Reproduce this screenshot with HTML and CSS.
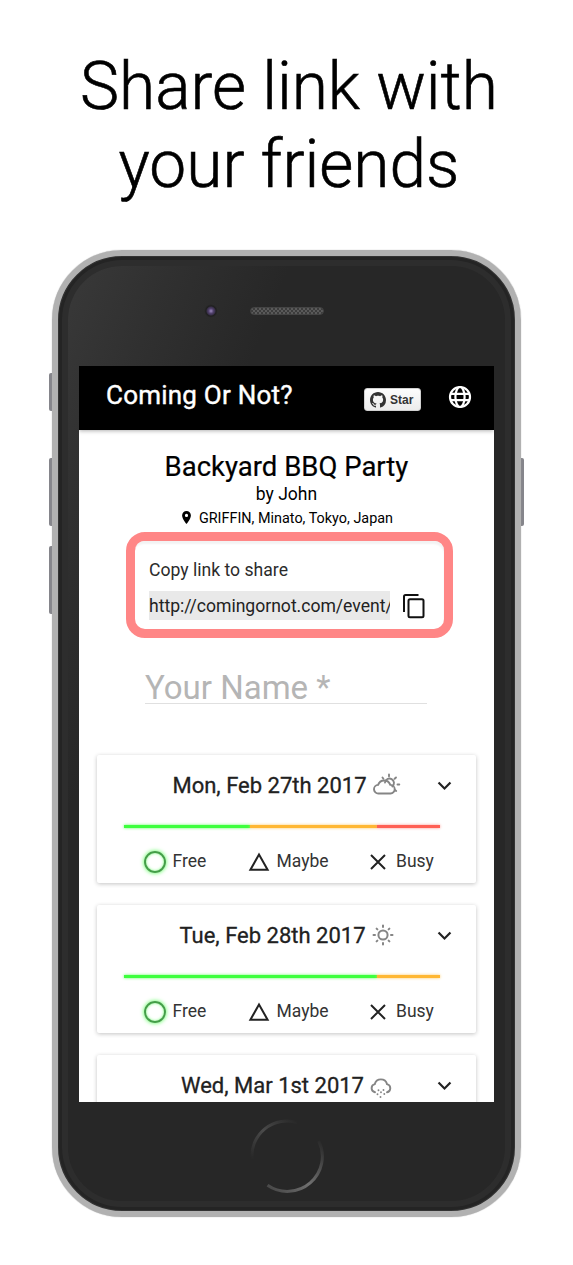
FILE: index.html
```html
<!DOCTYPE html>
<html lang="en">
<head>
<meta charset="utf-8">
<title>Coming Or Not?</title>
<link rel="stylesheet" href="styles.css">
</head>
<body>
<svg class="defs" width="0" height="0" aria-hidden="true">
  <symbol id="chevron" viewBox="0 0 24 24"><path d="M7.4 7.8 12 12.4l4.6-4.6L18 9.2l-6 6-6-6z"/></symbol>
  <symbol id="triangle" viewBox="0 0 22 20"><path d="M11 2.6 19.6 17.7H2.4z" fill="none" stroke="currentColor" stroke-width="2"/></symbol>
  <symbol id="cross" viewBox="0 0 16 16"><path d="M1 1l14 14M15 1 1 15" fill="none" stroke="currentColor" stroke-width="2"/></symbol>
</svg>
<h1 class="headline">Share link with<br>your friends</h1>
<main class="phone">
  <i class="key key-mute"></i><i class="key key-up"></i><i class="key key-down"></i><i class="key key-power"></i>
  <div class="shell">
    <div class="bezel-top">
      <span class="camera"></span>
      <span class="speaker"></span>
    </div>
    <div class="screen">
      <header class="bar">
        <span class="brand">Coming Or Not?</span>
        <a class="star">
          <svg width="16" height="16" viewBox="0 0 16 16"><path fill="#333" d="M8 0C3.58 0 0 3.58 0 8c0 3.54 2.29 6.53 5.47 7.59.4.07.55-.17.55-.38 0-.19-.01-.82-.01-1.49-2.01.37-2.53-.49-2.69-.94-.09-.23-.48-.94-.82-1.13-.28-.15-.68-.52-.01-.53.63-.01 1.08.58 1.23.82.72 1.21 1.87.87 2.33.66.07-.52.28-.87.51-1.07-1.78-.2-3.64-.89-3.64-3.95 0-.87.31-1.59.82-2.15-.08-.2-.36-1.02.08-2.12 0 0 .67-.21 2.2.82.64-.18 1.32-.27 2-.27s1.36.09 2 .27c1.53-1.04 2.2-.82 2.2-.82.44 1.1.16 1.92.08 2.12.51.56.82 1.27.82 2.15 0 3.07-1.87 3.75-3.65 3.95.29.25.54.73.54 1.48 0 1.07-.01 1.93-.01 2.2 0 .21.15.46.55.38A8.01 8.01 0 0 0 16 8c0-4.42-3.58-8-8-8z"/></svg>
          <span>Star</span>
        </a>
        <svg class="globe" width="24" height="24" viewBox="0 0 24 24" fill="none" stroke="#fff" stroke-width="2.200"><circle cx="12" cy="12" r="10"/><ellipse cx="12" cy="12" rx="4.6" ry="10"/><path d="M3 8.8h18M3 15.2h18"/></svg>
      </header>
      <section class="event">
        <h2 class="title">Backyard BBQ Party</h2>
        <p class="host">by John</p>
        <p class="place"><svg width="9" height="13" viewBox="0 0 9 13"><path fill-rule="evenodd" d="M4.5 0A4.4 4.4 0 0 0 .1 4.4C.1 7.7 4.5 13 4.5 13s4.4-5.3 4.4-8.6A4.4 4.4 0 0 0 4.500 0zm0 6a1.600 1.600 0 1 1 0-3.200 1.600 1.600 0 0 1 0 3.200z"/></svg><span>GRIFFIN, Minato, Tokyo, Japan</span></p>
      </section>
      <section class="share">
        <div class="share-card">
          <p class="share-label">Copy link to share</p>
          <div class="share-row">
            <span class="url">http://comingornot.com/event/</span>
            <svg width="24" height="26" viewBox="0 0 24 26" fill="none" stroke="#111" stroke-width="2"><path d="M2 19V3.500Q2 2 3.500 2H16.500"/><rect x="6.500" y="6.200" width="15" height="18" rx="1.500"/></svg>
          </div>
        </div>
      </section>
      <div class="field"><span>Your Name *</span></div>
      <div class="days">
        <article class="day">
          <div class="date"><i></i><span class="when"><span>Mon, Feb 27th 2017</span>
            <svg width="28" height="24" viewBox="0 0 28 24" fill="none" stroke="#858585" stroke-width="1.900" stroke-linecap="round"><path d="M5.500 20.500a4.300 4.300 0 0 1-.4-8.600 6.400 6.400 0 0 1 12.200 0 4.300 4.300 0 0 1 .2 8.600z"/><path d="M12 9.500a4.500 4.500 0 1 1 7.300 4M16 1.400v1.800M9.500 4.500l.9 1.200M23 4.500l-1.400 1.300M24.500 11.500h1.800M22 17l1.200 1"/></svg></span>
            <svg class="chev" width="27" height="27"><use href="#chevron"/></svg></div>
          <div class="meter"><i class="free" style="width:40%"></i><i class="maybe" style="width:40%"></i><i class="busy" style="width:20%"></i></div>
          <div class="options"><i class="ring"></i><span class="o-free">Free</span><svg class="tri" width="22" height="20"><use href="#triangle"/></svg><span class="o-maybe">Maybe</span><svg class="x" width="16" height="16"><use href="#cross"/></svg><span class="o-busy">Busy</span></div>
        </article>
        <article class="day">
          <div class="date"><i></i><span class="when"><span>Tue, Feb 28th 2017</span>
            <svg width="22" height="22" viewBox="0 0 22 22" fill="none" stroke="#858585" stroke-width="2" stroke-linecap="round"><circle cx="11" cy="11" r="4.600"/><path d="M11 1.500v1.500M11 19v1.500M1.500 11h1.500M19 11h1.500M4.600 4.600l.8.800M16.600 16.600l.8.800M17.400 4.600l-.8.800M5.400 16.600l-.8.800"/></svg></span>
            <svg class="chev" width="27" height="27"><use href="#chevron"/></svg></div>
          <div class="meter"><i class="free" style="width:80%"></i><i class="maybe" style="width:20%"></i></div>
          <div class="options"><i class="ring"></i><span class="o-free">Free</span><svg class="tri" width="22" height="20"><use href="#triangle"/></svg><span class="o-maybe">Maybe</span><svg class="x" width="16" height="16"><use href="#cross"/></svg><span class="o-busy">Busy</span></div>
        </article>
        <article class="day">
          <div class="date"><i></i><span class="when"><span>Wed, Mar 1st 2017</span>
            <svg class="snow" width="22" height="22" viewBox="0 0 22 22" fill="none" stroke="#858585" stroke-width="1.900" stroke-linecap="round"><path d="M5 15.300a4.200 4.200 0 0 1-.2-8.200 6.300 6.300 0 0 1 12.200 0A4.200 4.200 0 0 1 17 15.300"/><path d="M8.500 13.200v.1M13.500 13v.1M11 15.200v.1M7.500 17.200v.1M14.300 17v.1M10.500 20v.1"/></svg></span>
            <svg class="chev" width="27" height="27"><use href="#chevron"/></svg></div>
        </article>
      </div>
    </div>
    <div class="bezel-bottom">
      <svg width="76" height="76" viewBox="0 0 76 76" fill="none" stroke-width="3">
        <defs>
          <linearGradient id="ga" x1="0" y1="1" x2="1" y2="0"><stop offset="0" stop-color="#272727"/><stop offset=".5" stop-color="#4a4a4a"/><stop offset="1" stop-color="#272727"/></linearGradient>
          <linearGradient id="gb" x1="0" y1="1" x2="1" y2="0"><stop offset="0" stop-color="#444"/><stop offset=".45" stop-color="#707070"/><stop offset="1" stop-color="#272727"/></linearGradient>
        </defs>
        <path stroke="url(#ga)" d="M3 41A35 35 0 0 1 48 4.500"/>
        <path stroke="url(#gb)" d="M69.800 23A35 35 0 0 1 18.500 67.200"/>
      </svg>
    </div>
  </div>
</main>
</body>
</html>
```
FILE: styles.css
```css
* { box-sizing: border-box; }
body { margin: 0; height: 1265px; overflow: hidden; background: #fff; font-family: Roboto, "Liberation Sans", sans-serif; color: #111; }
h1, h2, p { margin: 0; font-weight: 400; }
i { display: block; font-style: normal; }
svg { display: block; flex: none; }
span { white-space: nowrap; }
.defs { position: absolute; }
.headline { height: 250px; padding-top: 48px; padding-left: 5px; text-align: center; font-size: 65.800px; line-height: 78px; font-weight: 300; color: #000; -webkit-text-stroke: .6px #000; }
.phone { position: relative; width: 469px; height: 967px; margin-left: 52px; }
.key { position: absolute; left: -3px; width: 4px; background: #85858b; border-radius: 2px 0 0 2px; }
.key-mute { top: 123px; height: 38px; }
.key-up { top: 208px; height: 68px; }
.key-down { top: 296px; height: 68px; }
.key-power { top: 208px; height: 68px; left: auto; right: -3px; border-radius: 0 2px 2px 0; }
.shell { position: relative; height: 967px; border: 6px solid #b1b1b1; border-radius: 70px; padding: 0 21px;
  background: linear-gradient(112deg, #3a3a3a 0, #303030 14%, #272727 28%, #272727 100%);
  box-shadow: inset 0 0 0 1px #333, inset 0 0 0 4px #242424, inset 0 0 0 10px #2d2d2d, 0 0 1px #999; }
.bezel-top { height: 110px; padding-top: 48px; display: flex; align-items: center; padding-bottom: 48px; }
.camera { width: 14px; height: 14px; margin-left: 125px; border-radius: 50%; background: radial-gradient(circle, #9a88bd 0, #50406b 2.500px, #39304a 4px, #1f1f1f 5px, #2d2d2d 7px); }
.speaker { width: 74px; height: 8px; margin-left: 31.500px; border-radius: 4px; background: repeating-conic-gradient(#3c3c3c 0 25%, #5a5a5a 0 50%) 0 0 / 4px 4px; border: 1px solid #444; }
.screen { width: 415px; height: 736px; overflow: hidden; background: #fff; }
.bar { height: 64px; background: #000; color: #fff; display: flex; align-items: center; padding-left: 27px; position: relative; box-shadow: 0 1px 4px rgba(0,0,0,.3); }
.brand { width: 258px; padding-bottom: 7px; font-size: 26px; line-height: 32px; letter-spacing: .22px; -webkit-text-stroke: .4px #fff; }
.star { width: 57px; height: 23px; margin-top: 3px; display: flex; align-items: center; gap: 4px; padding-left: 5px; border: 1px solid #d0d0d0; border-radius: 3px; background: linear-gradient(#fcfcfc, #ececec); font: bold 12px "Liberation Sans", sans-serif; color: #333; }
.globe { margin-left: 27px; margin-bottom: 2px; }
.event { padding-top: 21px; text-align: center; color: #000; }
.title { font-size: 27.500px; line-height: 32px; -webkit-text-stroke: .2px #000; }
.host { font-size: 17.500px; line-height: 23px; }
.place { font-size: 14.400px; line-height: 24px; padding-top: 1px; height: 24px; display: flex; justify-content: center; align-items: center; gap: 8px; padding-left: 2px; }
.place svg { margin-bottom: 3px; }
.share { margin: 2px 0 0 47px; width: 327px; height: 106px; border: 9.500px solid #ff8686; border-radius: 19px; }
.share-card { height: 100%; padding: 16px 0 0 14px; border-radius: 9px; box-shadow: inset -1px 4px 2px -1px #f3f3f3; }
.share-label { font-size: 17.600px; line-height: 26px; color: #2b2b2b; }
.share-row { display: flex; align-items: center; margin-top: 8px; gap: 12px; }
.url { width: 241px; height: 29px; background: #e9e9e9; overflow: hidden; font-size: 17.600px; line-height: 30px; letter-spacing: -.02px; color: #222; }
.field { margin: 32px 0 0 66px; width: 282px; height: 34px; line-height: 36px; border-bottom: 1px solid #e0e0e0; font-size: 33px; color: #b5b5b5; }
.days { margin: 51px 18px 0; display: grid; gap: 22px; }
.day { height: 128px; padding-top: 14px; background: #fff; border-radius: 2px; box-shadow: 0 1px 4px rgba(0,0,0,.24); }
.date { height: 34px; display: grid; grid-template-columns: 45px 1fr 45px; align-items: center; }
.when { display: flex; justify-content: center; align-items: center; gap: 6px; font-size: 22px; line-height: 34px; color: #212121; -webkit-text-stroke: .3px #212121; }
.when svg { margin-top: -3px; }
.when svg.snow { margin-top: 4px; }
.chev { fill: #222; }
.meter { margin: 22px 36px 0 27px; height: 3px; display: flex; }
.free { background: #3dff3d; box-shadow: 0 0 3px #5aff5a; }
.maybe { background: #ffb733; box-shadow: 0 0 3px #ffc65c; }
.busy { background: #ff6055; box-shadow: 0 0 3px #ff8f88; }
.options { height: 26px; margin-top: 20px; display: flex; align-items: center; padding-left: 46.500px; font-size: 17.500px; color: #333; }
.ring { width: 22px; height: 22px; margin-top: 1px; border: 2px solid #43a047; border-radius: 50%; box-shadow: 0 0 4px #4cff4c, inset 0 0 3px #7cff7c; }
.o-free { width: 76px; padding-left: 7px; }
.o-maybe { width: 100.500px; padding-left: 7px; }
.o-busy { padding-left: 10px; }
.tri, .x { color: #222; margin-top: 1px; }
.tri { margin-left: 6px; }
.bezel-bottom { height: 115px; display: flex; justify-content: center; padding-top: 16px; }
```
